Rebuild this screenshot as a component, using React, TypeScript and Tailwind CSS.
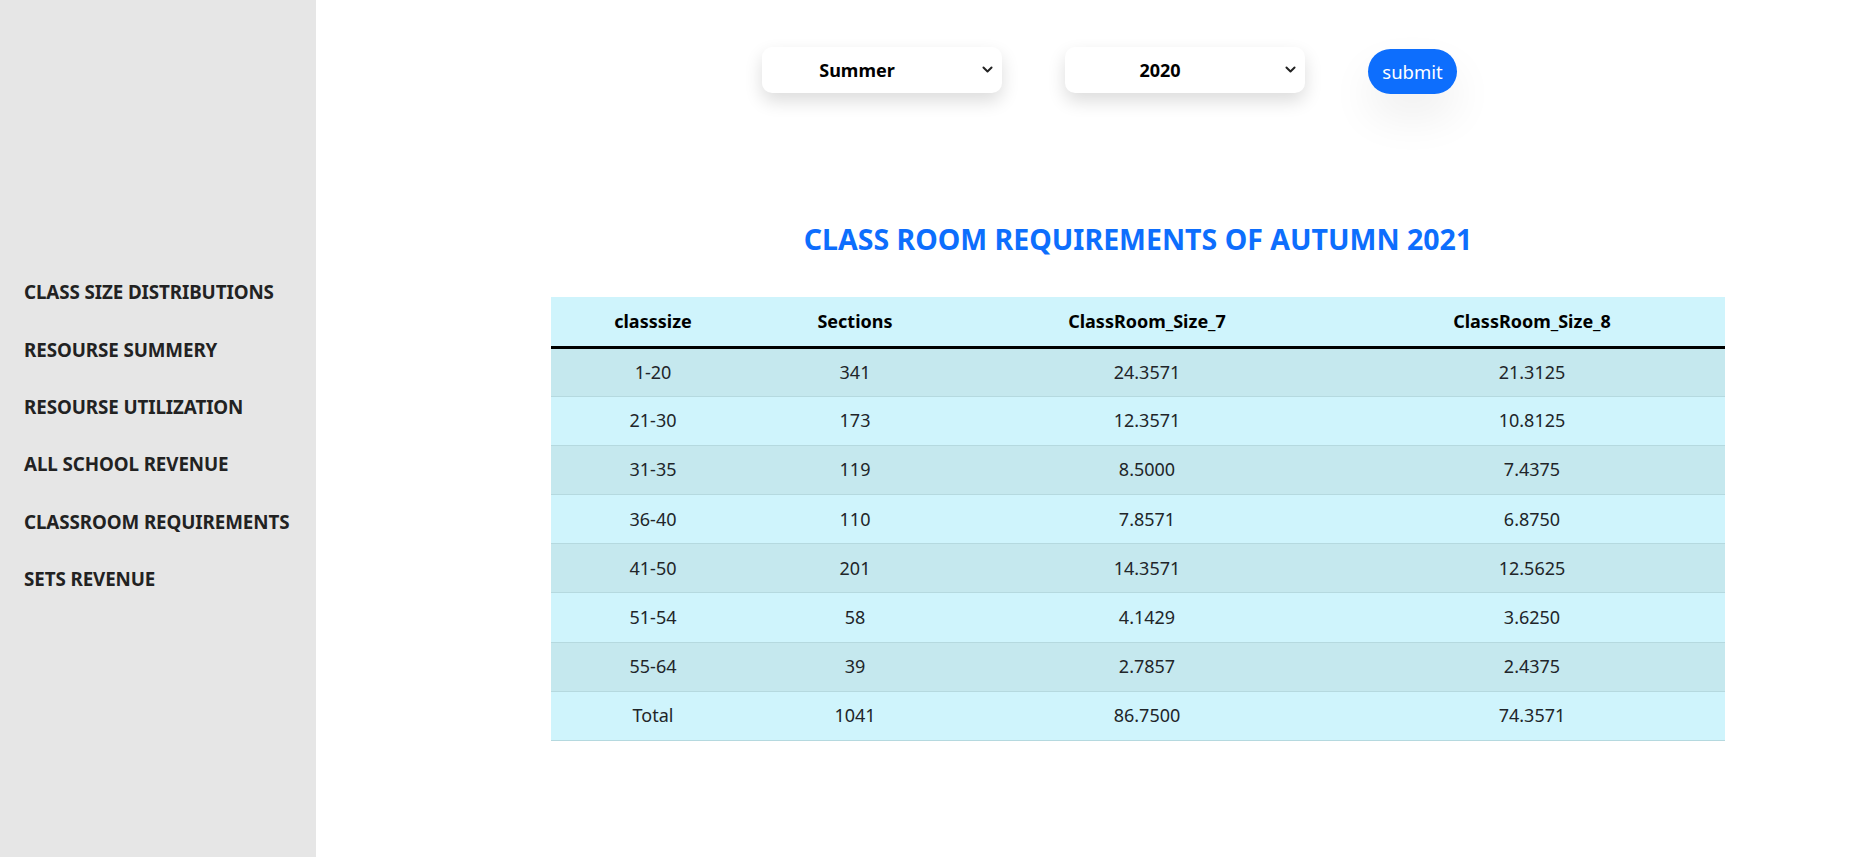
import React from "react";

const navItems = [
  "CLASS SIZE DISTRIBUTIONS",
  "RESOURSE SUMMERY",
  "RESOURSE UTILIZATION",
  "ALL SCHOOL REVENUE",
  "CLASSROOM REQUIREMENTS",
  "SETS REVENUE",
];

const rows = [
  ["1-20", "341", "24.3571", "21.3125"],
  ["21-30", "173", "12.3571", "10.8125"],
  ["31-35", "119", "8.5000", "7.4375"],
  ["36-40", "110", "7.8571", "6.8750"],
  ["41-50", "201", "14.3571", "12.5625"],
  ["51-54", "58", "4.1429", "3.6250"],
  ["55-64", "39", "2.7857", "2.4375"],
  ["Total", "1041", "86.7500", "74.3571"],
];

function Chevron() {
  return (
    <svg width="13" height="13" viewBox="0 0 16 16" fill="none" stroke="#222" strokeWidth="2.4" strokeLinecap="round" strokeLinejoin="round">
      <path d="M3 5.5l5 5 5-5" />
    </svg>
  );
}

function SelectBox({ value }: { value: string }) {
  return (
    <div className="relative flex h-[46px] w-[240px] items-center rounded-[10px] bg-white shadow-[0_8px_18px_rgba(0,0,0,0.14)]">
      <span className="w-[190px] text-center text-[18px] font-bold text-black">{value}</span>
      <span className="absolute right-[8px] top-[16px]">
        <Chevron />
      </span>
    </div>
  );
}

export default function App() {
  return (
    <div className="flex h-screen w-full bg-white font-['Noto_Sans','Open_Sans',sans-serif] text-[#212529]">
      <aside className="flex w-[316px] shrink-0 flex-col bg-[#e6e6e6] pl-[24px] pt-[264px]">
        {navItems.map((t) => (
          <div key={t} className="flex h-[57.4px] items-center text-[18.8px] font-bold leading-none tracking-[-0.1px] text-[#222]">
            {t}
          </div>
        ))}
      </aside>
      <main className="flex flex-1 flex-col">
        <div className="flex pt-[47px]">
          <div className="ml-[446px] flex items-start">
            <SelectBox value="Summer" />
            <div className="ml-[63px]">
              <SelectBox value="2020" />
            </div>
            <button className="ml-[63px] mt-[2px] h-[45px] w-[89px] rounded-full bg-[#0d6efd] text-[18.5px] text-white shadow-[0_22px_45px_rgba(0,0,0,0.07)]">
              submit
            </button>
          </div>
        </div>
        <div className="ml-[235px] mt-[126px] w-[1174px]">
          <h2 className="text-center text-[28.5px] font-bold leading-[38px] text-[#0d6efd]">
            CLASS ROOM REQUIREMENTS OF AUTUMN 2021
          </h2>
          <table className="mt-[39px] w-[1174px] border-collapse text-[18px]">
            <thead>
              <tr className="bg-[#cff4fc]">
                <th className="h-[50px] w-[204px] p-0 font-bold text-black">classsize</th>
                <th className="h-[50px] w-[200px] p-0 font-bold text-black">Sections</th>
                <th className="h-[50px] w-[384px] p-0 font-bold text-black">ClassRoom_Size_7</th>
                <th className="h-[50px] w-[386px] p-0 font-bold text-black">ClassRoom_Size_8</th>
              </tr>
            </thead>
            <tbody className="border-t-[3px] border-black">
              {rows.map((r, i) => (
                <tr
                  key={r[0]}
                  className={
                    i % 2 === 0
                      ? "border-b border-[#b5d9df] bg-[#c5e8ee]"
                      : "border-b border-[#b5d9df] bg-[#cff4fc]"
                  }
                >
                  {r.map((c, j) => (
                    <td key={j} className="h-[49.2px] p-0 text-center font-normal text-[#212529]">
                      {c}
                    </td>
                  ))}
                </tr>
              ))}
            </tbody>
          </table>
        </div>
      </main>
    </div>
  );
}
